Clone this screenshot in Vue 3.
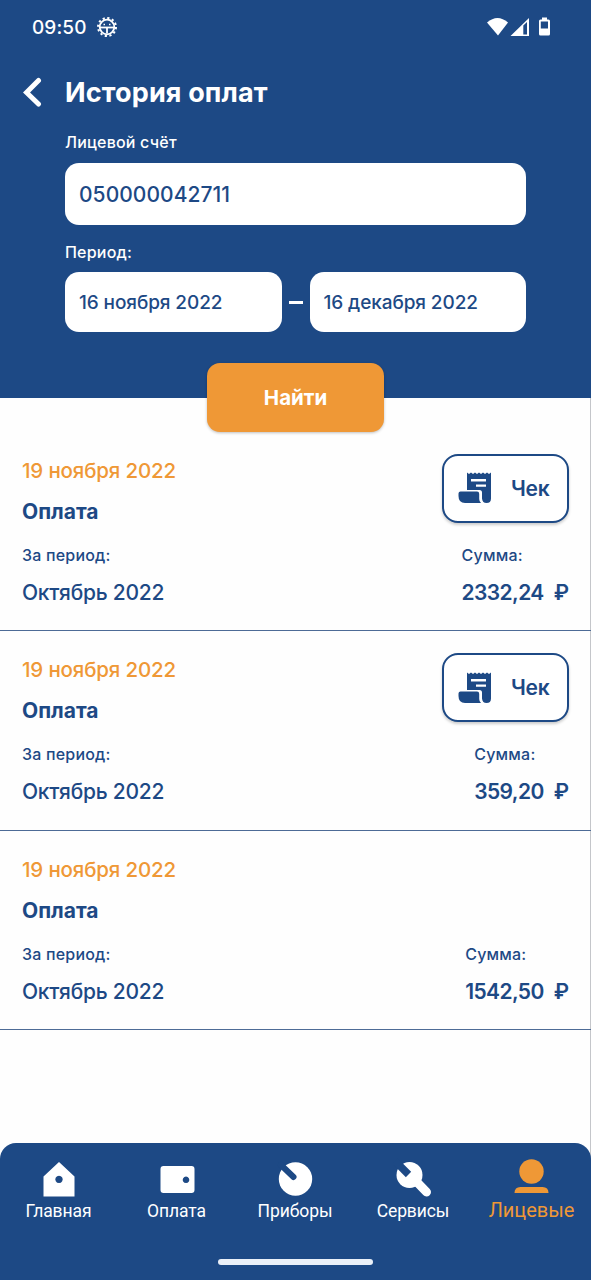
<style>
    body {
        margin: 0;
        background-color: #fefefe;
    }
</style>

<style scoped>
    .pantalla {
        display: flex;
        flex-direction: column;
        box-sizing: border-box;
        width: 100%;
        height: 1280px;
        overflow: hidden;
        background: linear-gradient(#c4c6ca, #c4c6ca) right top / 1px 100% no-repeat #fefefe;
        color: #1d4985;
        font-family: Inter, 'Noto Sans', sans-serif;
        font-weight: 500;
        white-space: nowrap;
    }

    svg {
        display: block;
        flex: none;
    }

    .header {
        display: flex;
        flex-direction: column;
        box-sizing: border-box;
        height: 398px;
        flex: none;
        background-color: #1d4985;
        color: white;
    }

    .status {
        display: flex;
        align-items: center;
        flex: none;
        height: 54px;
        padding: 0 39px 0 32px;
    }

    .time {
        width: 54px;
        margin-right: 10px;
        font-size: 19px;
        letter-spacing: 0.1px;
    }

    .signals {
        margin-left: auto;
    }

    .title-row {
        display: flex;
        align-items: center;
        flex: none;
        height: 76px;
        padding-left: 23px;
    }

    h1 {
        margin: 0 0 0 23px;
        font-size: 27px;
        font-weight: 700;
        letter-spacing: 0.15px;
    }

    .form {
        display: flex;
        flex-direction: column;
        flex: none;
        padding: 0 65px;
    }

    .form label {
        height: 24px;
        line-height: 24px;
        font-size: 16px;
        letter-spacing: 0.2px;
    }

    .field {
        display: flex;
        align-items: center;
        box-sizing: border-box;
        flex: 1;
        height: 60px;
        padding-left: 14px;
        border-radius: 14px;
        background-color: white;
        color: #1d4985;
        font-size: 19px;
        letter-spacing: -0.1px;
    }

    .account {
        flex: none;
        height: 62px;
        margin: 9px 0 15px;
        font-size: 21px;
        letter-spacing: 0.05px;
    }

    .period {
        display: flex;
        align-items: center;
        margin-top: 8px;
    }

    .dash {
        width: 14px;
        height: 3px;
        margin: 0 7px;
        background-color: white;
    }

    .find {
        display: flex;
        align-items: center;
        justify-content: center;
        align-self: center;
        flex: none;
        width: 177px;
        height: 69px;
        margin-top: 31px;
        border-radius: 13px;
        background-color: #ef9836;
        box-shadow: 0 1px 3px rgba(0, 0, 0, 0.25);
        font-size: 20.5px;
        font-weight: 700;
    }

    .records {
        flex: 1;
        margin: 0;
        padding: 33.5px 0 0;
        list-style: none;
    }

    .record {
        box-sizing: border-box;
        height: 199.5px;
        padding: 22px 22px 0;
        border-bottom: 1px solid #4d6b96;
    }

    .top,
    .bottom {
        display: flex;
        justify-content: space-between;
    }

    .top {
        height: 81px;
    }

    .date {
        line-height: 33px;
        color: #ef9836;
        font-size: 20.5px;
        letter-spacing: -0.15px;
    }

    .kind {
        line-height: 49px;
        font-size: 21px;
        font-weight: 700;
    }

    .check {
        display: flex;
        align-items: center;
        box-sizing: border-box;
        width: 127px;
        height: 69px;
        padding-left: 14px;
        border: 2px solid #1d4985;
        border-radius: 16px;
        background-color: white;
        box-shadow: 0 2px 3px rgba(0, 0, 0, 0.2);
        font-size: 21px;
        font-weight: 600;
        letter-spacing: -0.2px;
    }

    .check svg {
        margin-right: 19px;
    }

    .caption {
        line-height: 41px;
        font-size: 16px;
        letter-spacing: 0.2px;
    }

    .value {
        line-height: 33px;
        font-size: 21px;
        letter-spacing: -0.25px;
    }

    .sum {
        font-weight: 600;
        letter-spacing: -0.6px;
    }

    .rub {
        margin-left: 10px;
        letter-spacing: 0;
    }

    .tabs {
        box-sizing: border-box;
        height: 137px;
        flex: none;
        padding-top: 15px;
        border-radius: 16px 16px 0 0;
        background-color: #1d4985;
        color: white;
        font-family: Roboto, sans-serif;
        font-weight: 400;
    }

    .tab-row {
        display: grid;
        grid-template-columns: 117px 119px 118px 118px 119px;
        height: 101px;
    }

    .tab {
        display: flex;
        flex-direction: column;
        align-items: center;
        font-size: 17.5px;
        line-height: 23px;
        letter-spacing: -0.1px;
    }

    .tab svg {
        margin-bottom: 2px;
    }

    .active {
        color: #ef9836;
        font-size: 20px;
        line-height: 20px;
        letter-spacing: 0;
    }

    .home-bar {
        width: 155px;
        height: 6px;
        margin: 0 auto;
        border-radius: 3px;
        background-color: #eaf0f8;
    }
</style>

<template>
    <div class="pantalla">
        <header class="header">
            <div class="status">
                <span class="time">09:50</span>
                <svg width="22" height="22" viewBox="0 0 22 22" fill="none" stroke="white">
                    <circle cx="11" cy="11" r="7.3" stroke-width="1.8" />
                    <circle cx="11" cy="11" r="9" stroke-width="2" stroke-dasharray="2.2 2.512" />
                    <path d="M4 11.500h14" stroke-width="1.800" />
                    <path d="M11 11.500v6" stroke-width="1.800" />
                    <path d="M7.500 8.500h1.500M13 8.500h1.500" stroke-width="1.300" />
                </svg>
                <svg class="signals" width="66" height="22" viewBox="0 0 66 22" fill="white">
                    <path d="M1 6.500Q11.500 -2.500 22 6.500L12 19.500Z" />
                    <path fill-rule="evenodd" d="M43 2V20H24.500ZM37.300 9.500V18.500H41V6Z" />
                    <path fill-rule="evenodd" d="M56 1.500h5v2h1.500q1.500 0 1.500 1.500v13q0 1.500-1.500 1.500h-8q-1.500 0-1.500-1.500v-13q0-1.500 1.500-1.500H56ZM54.800 5.500v7h7.200v-7Z" />
                </svg>
            </div>
            <div class="title-row">
                <svg width="19" height="30" viewBox="0 0 19 30" fill="none" stroke="white" stroke-width="5" stroke-linecap="round">
                    <path d="M15.500 3.500L3.500 15.500L15.500 27" />
                </svg>
                <h1>История оплат</h1>
            </div>
            <div class="form">
                <label>Лицевой счёт</label>
                <div class="field account">{{ account }}</div>
                <label>Период:</label>
                <div class="period">
                    <div class="field">16 ноября 2022</div>
                    <span class="dash"></span>
                    <div class="field">16 декабря 2022</div>
                </div>
            </div>
            <div class="find">Найти</div>
        </header>

        <ul class="records">
            <li class="record" v-for="(pago, i) in pagos" :key="i">
                <div class="top">
                    <div>
                        <div class="date">{{ pago.date }}</div>
                        <div class="kind">Оплата</div>
                    </div>
                    <div class="check" v-if="pago.check">
                        <svg width="34" height="32" viewBox="0 0 34 32" fill="#1d4985">
                            <path fill-rule="evenodd" d="M9 .5l2 1.500 2-1.500 2 1.500 2-1.500 2 1.500 2-1.500 2 1.500 2-1.500 2 1.500 2-1.500 2 1.500 2-1.500V26.500q0 4.500-4.500 4.500-4 0-4.500-4.500V20.500q0-2.500-2.500-2.500H9ZM13 7v2.400h15V7ZM18 12.500v2.300h10v-2.300Z" />
                            <path d="M2.500 19.500H19q2.200 0 2.200 2.200V27q0 2.500 1.800 4H7Q.5 31 .5 24V21.500Q.5 19.500 2.500 19.500Z" />
                        </svg>
                        <span>Чек</span>
                    </div>
                </div>
                <div class="bottom">
                    <div>
                        <div class="caption">За период:</div>
                        <div class="value">Октябрь 2022</div>
                    </div>
                    <div>
                        <div class="caption">Сумма:</div>
                        <div class="value sum">{{ pago.sum }}<span class="rub">₽</span></div>
                    </div>
                </div>
            </li>
        </ul>

        <nav class="tabs">
            <div class="tab-row">
                <div class="tab">
                    <svg width="40" height="40" viewBox="0 0 40 40" fill="white">
                        <path fill-rule="evenodd" d="M20 4L35.500 18.500V38.500H4.500V18.500ZM20 17.700a3.700 3.700 0 1 0 .01 0Z" />
                    </svg>
                    <span>Главная</span>
                </div>
                <div class="tab">
                    <svg width="40" height="40" viewBox="0 0 40 40" fill="white">
                        <path fill-rule="evenodd" d="M6.500 8h28q3 0 3 3v21q0 3-3 3h-28q-3 0-3-3V11q0-3 3-3ZM29 18.500a3.300 3.300 0 1 0 .01 0Z" />
                    </svg>
                    <span>Оплата</span>
                </div>
                <div class="tab">
                    <svg width="40" height="40" viewBox="0 0 40 40">
                        <circle cx="20.500" cy="21" r="16.700" fill="white" />
                        <path d="M6 7L18.500 19" stroke="#1d4985" stroke-width="6" stroke-linecap="round" />
                    </svg>
                    <span>Приборы</span>
                </div>
                <div class="tab">
                    <svg width="40" height="40" viewBox="0 0 40 40">
                        <circle cx="16.500" cy="17" r="13" fill="white" />
                        <path d="M20 20L33.500 34" stroke="white" stroke-width="9" stroke-linecap="round" />
                        <path d="M2 3L15.500 16.500" stroke="#1d4985" stroke-width="7.500" />
                    </svg>
                    <span>Сервисы</span>
                </div>
                <div class="tab active">
                    <svg width="40" height="40" viewBox="0 0 40 40" fill="#ef9836">
                        <circle cx="19.500" cy="13.500" r="12.200" />
                        <path d="M2.500 35q0-6 6-6h22q6 0 6 6Z" />
                    </svg>
                    <span>Лицевые</span>
                </div>
            </div>
            <div class="home-bar"></div>
        </nav>
    </div>
</template>

<script setup>
import { ref } from 'vue'

const account = ref('050000042711')

const pagos = ref([
    { date: '19 ноября 2022', sum: '2332,24', check: true },
    { date: '19 ноября 2022', sum: '359,20', check: true },
    { date: '19 ноября 2022', sum: '1542,50', check: false }
])
</script>
